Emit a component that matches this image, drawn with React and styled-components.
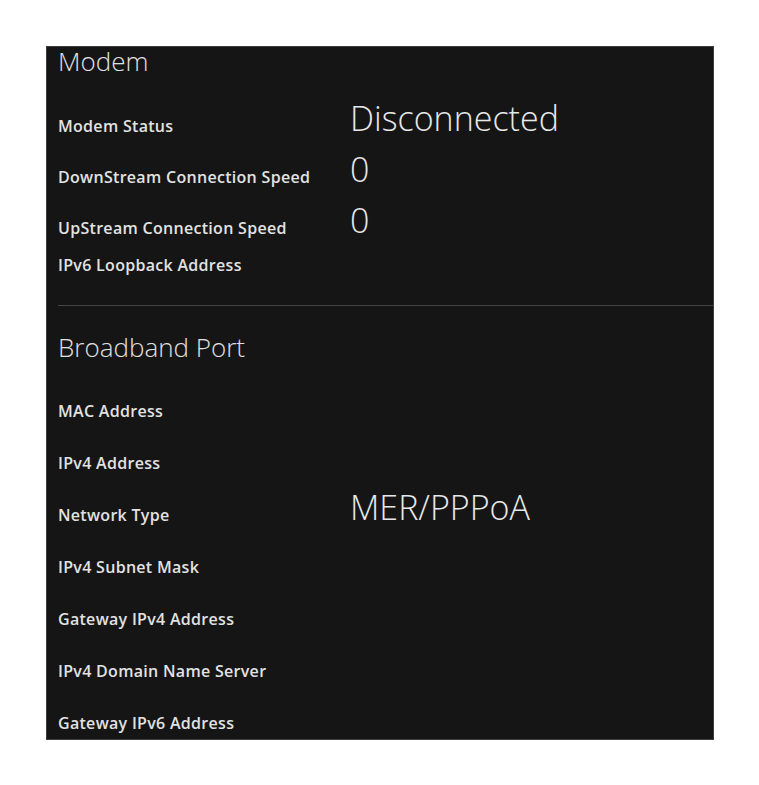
import React from 'react';
import styled, { createGlobalStyle } from 'styled-components';

const GlobalStyle = createGlobalStyle`
   html, body {
      margin: 0;
      padding: 0;
      background: #ffffff;
   }
   body {
      font-family: "Open Sans", "Noto Sans", sans-serif;
   }
`;

const Page = styled.div`
   padding: 46px 45px 46px 46px;
`;

const Panel = styled.div`
   width: 668px;
   box-sizing: border-box;
   background: #151515;
   border: 1px solid #3c3c3c;
   padding: 0 0 7px 11px;
   color: #e4e4e4;
`;

const SectionTitle = styled.h2`
   margin: ${({ $top }) => $top || 0}px 0 0;
   font-size: 26px;
   line-height: 28px;
   padding-bottom: 2px;
   font-weight: 300;
   color: #e0e0e0;
`;

const Rows = styled.div`
   display: flex;
   flex-direction: column;
   margin-top: ${({ $gap }) => $gap}px;
`;

const Row = styled.div`
   display: grid;
   grid-template-columns: 292px 1fr;
   align-items: end;
   height: ${({ $height }) => $height}px;
`;

const Label = styled.span`
   font-size: 16px;
   line-height: 18px;
   font-weight: 600;
   letter-spacing: 0.3px;
   color: #e2e2e2;
   white-space: nowrap;
`;

const Value = styled.span`
   font-size: 34px;
   line-height: 33px;
   font-weight: 300;
   color: #e8e8e8;
   white-space: nowrap;
`;

const Divider = styled.hr`
   margin: 31px 0 0;
   border: 0;
   height: 1px;
   background: #454545;
`;

const modem = [
   { label: 'Modem Status', value: 'Disconnected', height: 51 },
   { label: 'DownStream Connection Speed', value: '0', height: 51 },
   { label: 'UpStream Connection Speed', value: '0', height: 51 },
   { label: 'IPv6 Loopback Address', value: '', height: 37 },
];

const broadband = [
   { label: 'MAC Address', value: '' },
   { label: 'IPv4 Address', value: '' },
   { label: 'Network Type', value: 'MER/PPPoA' },
   { label: 'IPv4 Subnet Mask', value: '' },
   { label: 'Gateway IPv4 Address', value: '' },
   { label: 'IPv4 Domain Name Server', value: '' },
   { label: 'Gateway IPv6 Address', value: '' },
];

const InfoRow = ({ label, value, height = 52 }) => (
   <Row $height={height}>
      <Label>{label}</Label>
      <Value>{value}</Value>
   </Row>
);

export default function App() {
   return (
      <Page>
         <GlobalStyle />
         <Panel>
            <SectionTitle>Modem</SectionTitle>
            <Rows $gap={7}>
               {modem.map(item => <InfoRow key={item.label} {...item} />)}
            </Rows>
            <Divider />
            <SectionTitle $top={27}>Broadband Port</SectionTitle>
            <Rows $gap={5}>
               {broadband.map(item => <InfoRow key={item.label} {...item} />)}
            </Rows>
         </Panel>
      </Page>
   );
}
